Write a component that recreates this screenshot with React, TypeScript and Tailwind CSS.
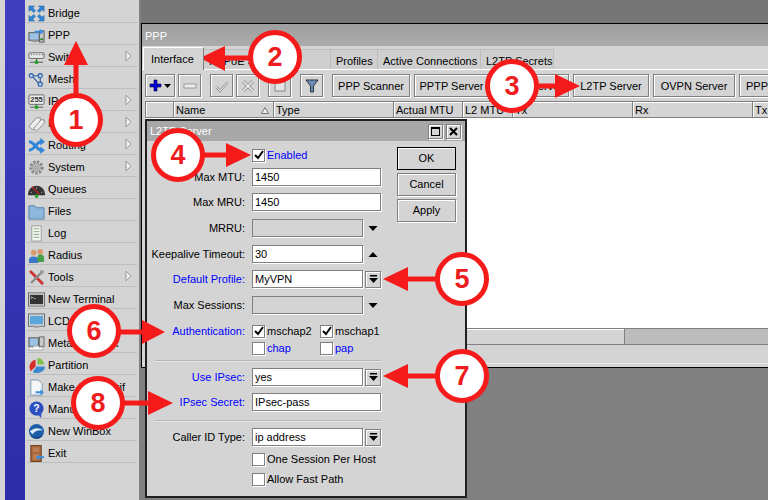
import React from 'react';

const font = { fontFamily: '"Liberation Sans", sans-serif' };

const raised = 'border border-[#808080] shadow-[inset_1px_1px_0_#fff,1px_1px_0_#fff]';

// Winbox side menu icons, roughly 17x17
const icons: Record<string, React.ReactNode> = {
  Bridge: (
    <g fill="#2f86d8" stroke="#17558f" strokeWidth="0.5">
      <path d="M1 1h6l-2 2 3 3-2 2-3-3-2 2z" />
      <path d="M17 1h-6l2 2-3 3 2 2 3-3 2 2z" />
      <path d="M1 17h6l-2-2 3-3-2-2-3 3-2-2z" />
      <path d="M17 17h-6l2-2-3-3 2-2 3 3 2-2z" />
    </g>
  ),
  PPP: (
    <g>
      <rect x="1" y="6" width="11" height="8" fill="#9cc3e6" stroke="#555" />
      <rect x="4" y="14" width="6" height="2" fill="#999" />
      <rect x="12" y="4" width="5" height="12" fill="#c8c8c8" stroke="#555" />
      <rect x="13" y="12" width="3" height="2" fill="#2a8a2a" />
      <path d="M7 4h6V2l4 3-4 3V6H7z" fill="#3a8ee0" />
    </g>
  ),
  Switch: (
    <g>
      <rect x="1" y="4" width="16" height="6" rx="1" fill="#e8e8e8" stroke="#666" />
      <path d="M3 6h1M6 6h1M9 6h1M12 6h1M15 6h1" stroke="#333" />
      <path d="M9 10v4M2 14h14" stroke="#555" />
      <circle cx="9" cy="14" r="2" fill="#27a327" />
    </g>
  ),
  Mesh: (
    <g fill="#b9d3ee" stroke="#2f5fa8" strokeWidth="1.2">
      <path d="M4 5h9M13 5v9M5 6l7 8" fill="none" />
      <circle cx="3.500" cy="5" r="2.200" />
      <circle cx="13" cy="5" r="2.200" />
      <circle cx="13" cy="14" r="2.200" />
    </g>
  ),
  IP: (
    <g>
      <rect x="1" y="2" width="16" height="10" rx="1" fill="#eee" stroke="#666" />
      <text x="9" y="10" textAnchor="middle" fontSize="8" fontWeight="700" fill="#333">255</text>
      <path d="M9 12v3M2 15h14" stroke="#555" />
      <circle cx="9" cy="15" r="2" fill="#27a327" />
    </g>
  ),
  MPLS: (
    <g fill="#eee" stroke="#888">
      <path d="M1 12l8-9h4v4l-8 9z" />
      <path d="M6 14l8-9h3v4l-8 8z" />
    </g>
  ),
  Routing: (
    <g fill="none" stroke="#2f86d8" strokeWidth="3">
      <path d="M1 5c6 0 8 9 13 9" />
      <path d="M1 14c6 0 8-9 13-9" />
      <path d="M13 1l5 4-5 4zM13 10l5 4-5 4z" fill="#2f86d8" stroke="none" />
    </g>
  ),
  System: (
    <g fill="none" stroke="#888">
      <circle cx="9" cy="9" r="6" strokeWidth="3" strokeDasharray="2.500 1.500" />
      <circle cx="9" cy="9" r="4" fill="#ddd" />
      <circle cx="9" cy="9" r="2" fill="#bbb" />
    </g>
  ),
  Queues: (
    <g>
      <path d="M0 14a9 9 0 0 1 18 0v1H0z" fill="#333" />
      <path d="M4 6l8 8" stroke="#e02020" strokeWidth="1.200" />
      <path d="M3 12h1M9 7v1M14 12h1" stroke="#ddd" />
      <circle cx="9" cy="16" r="2" fill="#27a327" />
    </g>
  ),
  Files: <path d="M1 5V3h6l2 2h8v12H1z" fill="#8db8de" stroke="#5580a8" />,
  Log: (
    <g>
      <path d="M4 1h10v16H4z" fill="#f3f6ee" stroke="#999" />
      <path d="M6 4h6M6 7h6M6 10h6M6 13h6" stroke="#8a8" />
    </g>
  ),
  Radius: (
    <g>
      <circle cx="6" cy="6" r="3" fill="#d99a6c" />
      <path d="M1 17v-3c0-3 2-4 5-4s5 1 5 4v3z" fill="#3b78c9" />
      <circle cx="13" cy="5" r="3" fill="#d99a6c" />
      <path d="M10 16v-5c0-2 1-3 3-3s4 1 4 3v5z" fill="#4aa04a" />
    </g>
  ),
  Tools: (
    <g strokeLinecap="round">
      <path d="M3 3l12 12" stroke="#c33" strokeWidth="3" />
      <path d="M15 3L4 14" stroke="#888" strokeWidth="2.500" />
      <path d="M13 1l4 1-1 3-3 0z" fill="#999" />
    </g>
  ),
  'New Terminal': (
    <g>
      <rect x="0.500" y="2" width="17" height="14" fill="#ddd" stroke="#666" />
      <rect x="2" y="4" width="14" height="10" fill="#333" />
      <path d="M3 6l2 1-2 1M6 8h2" stroke="#ddd" strokeWidth="0.800" fill="none" />
    </g>
  ),
  LCD: (
    <g>
      <rect x="0.500" y="1" width="17" height="13" fill="#ddd" stroke="#666" />
      <rect x="2" y="3" width="14" height="9" fill="#5aa6dc" />
      <path d="M6 14h6v2H6z" fill="#aaa" />
    </g>
  ),
  MetaROUTER: (
    <g>
      <rect x="1" y="3" width="10" height="9" fill="#9cc3e6" stroke="#555" />
      <rect x="12" y="2" width="5" height="10" fill="#ccc" stroke="#666" />
      <path d="M1 16c-1-3 2-4 4-3 1-2 6-2 7 0 3-1 5 1 4 3z" fill="#f4f4f4" stroke="#aaa" />
    </g>
  ),
  Partition: (
    <g>
      <path d="M8 3v7l-5 5C0 11 2 4 8 3z" fill="#d92d2d" />
      <path d="M10 1c4 0 7 3 7 7h-7z" fill="#7fc24c" />
      <path d="M9 10h9c0 4-4 7-9 7-2 0-3 0-4-1z" fill="#3b88cf" />
    </g>
  ),
  'Make Supout.rif': (
    <g>
      <path d="M3 1h8l4 4v12H3z" fill="#f4f6f8" stroke="#7a9ab0" />
      <path d="M8 13h5v-2l4 3-4 3v-2H8z" fill="#3a8ee0" />
    </g>
  ),
  Manual: (
    <g>
      <circle cx="9" cy="8" r="7.500" fill="#2b4fc0" />
      <path d="M10 14l4 4v-6z" fill="#2b4fc0" />
      <text x="9" y="12" textAnchor="middle" fontSize="11" fontWeight="700" fill="#fff">?</text>
    </g>
  ),
  'New WinBox': (
    <g>
      <circle cx="9" cy="9" r="8" fill="#1c5fa8" />
      <path d="M2 9c3-4 10-5 14-1-4-1-9 0-11 4z" fill="#dfeaf5" />
      <path d="M3 13c3 3 9 4 13-1-2 5-10 6-13 1z" fill="#0d2f5c" />
    </g>
  ),
  Exit: (
    <g>
      <rect x="3" y="0.500" width="11" height="17" fill="#a8653a" stroke="#6b3d20" />
      <rect x="5" y="2.500" width="7" height="5" fill="#bc7c50" />
      <rect x="5" y="9.500" width="7" height="6" fill="#bc7c50" />
      <path d="M17 12h-5v-2l-4 3 4 3v-2h5z" fill="#3a8ee0" />
    </g>
  ),
};

const menu = [
  ['Bridge', false],
  ['PPP', false],
  ['Switch', true],
  ['Mesh', false],
  ['IP', true],
  ['MPLS', true],
  ['Routing', true],
  ['System', true],
  ['Queues', false],
  ['Files', false],
  ['Log', false],
  ['Radius', false],
  ['Tools', true],
  ['New Terminal', false],
  ['LCD', false],
  ['MetaROUTER', false],
  ['Partition', false],
  ['Make Supout.rif', false],
  ['Manual', false],
  ['New WinBox', false],
  ['Exit', false],
] as const;

const tabs = [
  ['PPPoE Servers', 'w-[127px]'],
  ['Profiles', 'w-[47px]'],
  ['Active Connections', 'w-[103px]'],
  ['L2TP Secrets', 'w-[73px]'],
];

const columns = [
  ['', 'w-[28px]'],
  ['Name', 'w-[100px]'],
  ['Type', 'w-[120px]'],
  ['Actual MTU', 'w-[69px]'],
  ['L2 MTU', 'w-[50px]'],
  ['Tx', 'w-[120px]'],
  ['Rx', 'w-[120px]'],
  ['Tx', 'w-[40px]'],
];

function MenuItem({ name, sub }: { name: string; sub: boolean }) {
  return (
    <div className="flex h-[22px] items-center border-b border-[#bdbdbd] pl-[1px] pt-[3px] shrink-0 relative">
      <svg width="17" height="17" viewBox="0 0 18 18" className="shrink-0">
        {icons[name]}
      </svg>
      <span className="ml-[3px] whitespace-nowrap">{name}</span>
      {sub && (
        <svg width="7" height="12" viewBox="0 0 7 12" className="absolute left-[98px] top-[5px]">
          <path d="M1 1l5 5-5 5z" fill="#f0f0f0" stroke="#999" />
        </svg>
      )}
    </div>
  );
}

function ToolBtn({ w, children }: { w: string; children: React.ReactNode }) {
  return <div className={`${w} h-[23px] pt-[1px] shrink-0 flex items-center justify-center ${raised}`}>{children}</div>;
}

function Check({ on }: { on?: boolean }) {
  return (
    <div className="w-[13px] h-[13px] shrink-0 bg-white border border-[#808080] shadow-[1px_1px_0_#fff] flex items-center justify-center">
      {on && (
        <svg width="10" height="10" viewBox="0 0 10 10">
          <path d="M1 5l3 3 5-7" fill="none" stroke="#000" strokeWidth="2" />
        </svg>
      )}
    </div>
  );
}

function Input({ value, disabled, short }: { value?: string; disabled?: boolean; short?: boolean }) {
  return (
    <div
      className={`${short ? 'w-[111px]' : 'w-[129px]'} h-[18px] shrink-0 border border-[#808080] shadow-[1px_1px_0_#fff] pl-[2px] leading-[16px] ${disabled ? 'bg-[#d4d4d4]' : 'bg-white'}`}
    >
      {value}
    </div>
  );
}

function Row({ label, blue, mt, children }: { label?: string; blue?: boolean; mt: string; children: React.ReactNode }) {
  return (
    <div className={`flex h-[18px] items-center ${mt}`}>
      <div className={`w-[98px] mr-[7px] text-right whitespace-nowrap ${blue ? 'text-[#0000ff]' : ''}`}>{label}</div>
      {children}
    </div>
  );
}

function DropBtn() {
  return (
    <div className={`ml-[2px] w-[16px] h-[17px] shrink-0 flex items-center justify-center ${raised}`}>
      <svg width="9" height="9" viewBox="0 0 9 9">
        <path d="M1 0h7v1.500H1zM0 3h9L4.500 8z" fill="#000" />
      </svg>
    </div>
  );
}

function Updown({ up }: { up?: boolean }) {
  return (
    <svg width="16" height="8" viewBox="0 0 16 8" className="ml-[2px]">
      <path d={up ? 'M3.500 7h9L8 2z' : 'M3.500 2h9L8 7z'} fill="#000" />
    </svg>
  );
}

function Separator({ mt }: { mt: string }) {
  return <div className={`${mt} ml-[8px] w-[226px] h-[2px] border-t border-[#b4b4b4] border-b-[#e8e8e8] border-b`} />;
}

function Bubble({ n, x, y }: { n: number; x: string; y: string }) {
  return (
    <div
      className={`absolute ${x} ${y} w-[54px] h-[54px] rounded-full bg-white border-[5px] border-[#f51b1b] flex items-center justify-center text-[#ee1c1c] text-[27px] font-bold`}
    >
      {n}
    </div>
  );
}

export default function App() {
  return (
    <div className="relative flex w-[768px] h-[500px] overflow-hidden bg-[#d4d4d4] text-[11px] text-black" style={font}>
      {/* left strip and menu */}
      <div className="w-[5px] shrink-0 bg-[#d4d4d4]" />
      <div className="w-[20px] shrink-0 bg-gradient-to-b from-[#3f3fc0] to-[#2c2ca8]" />
      <div className="w-[110px] shrink-0 pt-[1px] mx-[2px] bg-[#d4d4d4] flex flex-col">
        {menu.map(([name, sub]) => (
          <MenuItem key={name} name={name} sub={sub} />
        ))}
      </div>

      {/* desktop area */}
      <div className="relative flex-1 bg-gradient-to-b from-[#757575] via-[#808080] to-[#808080] border-l-2 border-[#808080]">
        {/* PPP window */}
        <div className="absolute left-0 top-[23px] w-[640px] h-[345px] bg-[#d4d4d4] border-t border-b border-l border-black flex flex-col">
          <div className="h-[22px] shrink-0 bg-gradient-to-b from-[#9e9e9e] to-[#ababab] text-white flex items-center pl-[3px] pt-[3px]">PPP</div>
          <div className="h-[24px] shrink-0 flex items-end pl-[1px] border-b border-white relative">
            <div className="w-[61px] h-[23px] mb-[-1px] z-10 bg-[#d4d4d4] border-t border-l border-white border-r-[#808080] border-r flex items-center pl-[7px]">Interface</div>
            {tabs.map(([t, w]) => (
              <div key={t} className={`${w} h-[20px] shrink-0 border-r border-t border-[#bdbdbd] flex items-center pl-[5px] pt-[3px] whitespace-nowrap overflow-hidden bg-[#cfcfcf]`}>
                {t}
              </div>
            ))}
          </div>
          <div className="h-[23px] mt-[4px] shrink-0 flex items-center pl-[3px]">
            <ToolBtn w="w-[30px]">
              <svg width="24" height="16" viewBox="0 0 24 16">
                <path d="M6 2h3v4h4v3H9v4H6V9H2V6h4z" fill="#0000e0" stroke="#000030" strokeWidth="0.600" />
                <path d="M16 6h7l-3.500 4z" fill="#000" />
              </svg>
            </ToolBtn>
            <div className="ml-[3px]">
              <ToolBtn w="w-[23px]">
                <svg width="14" height="6" viewBox="0 0 14 6"><rect x="1" y="1" width="12" height="4" fill="#eee" stroke="#999" /></svg>
              </ToolBtn>
            </div>
            <div className="ml-[9px]">
              <ToolBtn w="w-[23px]">
                <svg width="14" height="14" viewBox="0 0 14 14"><path d="M1 8l4 4 8-9" fill="none" stroke="#999" strokeWidth="2.500" /><path d="M1 8l4 4 8-9" fill="none" stroke="#eee" strokeWidth="1" /></svg>
              </ToolBtn>
            </div>
            <div className="ml-[3px]">
              <ToolBtn w="w-[23px]">
                <svg width="14" height="14" viewBox="0 0 14 14"><path d="M2 2l10 10M12 2L2 12" fill="none" stroke="#999" strokeWidth="3.500" /><path d="M2 2l10 10M12 2L2 12" fill="none" stroke="#eee" strokeWidth="1.500" /></svg>
              </ToolBtn>
            </div>
            <div className="ml-[9px]">
              <ToolBtn w="w-[23px]">
                <svg width="12" height="12" viewBox="0 0 12 12"><rect x="1" y="1" width="10" height="10" fill="#e4e4e4" stroke="#888" /></svg>
              </ToolBtn>
            </div>
            <div className="ml-[9px]">
              <ToolBtn w="w-[23px]">
                <svg width="14" height="14" viewBox="0 0 14 14"><path d="M1 1h12L8.500 7v6h-3V7z" fill="#6c8db8" stroke="#333" /></svg>
              </ToolBtn>
            </div>
            <div className="ml-[9px] flex gap-[4px] whitespace-nowrap">
              <ToolBtn w="w-[78px]">PPP Scanner</ToolBtn>
              <ToolBtn w="w-[75px]">PPTP Server</ToolBtn>
              <ToolBtn w="w-[76px]">SSTP Server</ToolBtn>
              <ToolBtn w="w-[76px]">L2TP Server</ToolBtn>
              <ToolBtn w="w-[82px]">OVPN Server</ToolBtn>
              <ToolBtn w="w-[80px]"><span className="pl-[6px] w-full">PPPoE Scan</span></ToolBtn>
            </div>
          </div>
          <div className="mt-[4px] ml-[3px] flex-1 flex flex-col min-h-0">
            <div className="h-[17px] shrink-0 flex border-b border-[#808080]">
              {columns.map(([c, w], i) => (
                <div key={i} className={`${w} shrink-0 relative border-l border-t border-[#808080] shadow-[inset_1px_1px_0_#fff] pl-[2px] leading-[17px] whitespace-nowrap overflow-hidden`}>
                  {c}
                  {c === 'Name' && (
                    <svg width="8" height="7" viewBox="0 0 8 7" className="absolute right-[4px] top-[5px]"><path d="M4 0.500L7.500 6.500h-7z" fill="#eee" stroke="#777" /></svg>
                  )}
                </div>
              ))}
            </div>
            <div className="flex-1 bg-white" />
            <div className="h-[17px] shrink-0 flex bg-[#bcbcbc] border-y border-[#808080]">
              <div className="w-[480px] bg-[#d4d4d4] border-r border-[#808080] shadow-[inset_0_1px_0_#fff]" />
            </div>
          </div>
          <div className="h-[19px] shrink-0 border-b border-[#e8e8e8] mb-[3px]" />
        </div>

        {/* L2TP Server dialog */}
        <div className="absolute left-[4px] top-[119px] w-[322px] h-[379px] bg-[#d4d4d4] border-2 border-[#202020] flex flex-col">
          <div className="h-[20px] shrink-0 bg-[#a8a8a8] text-white flex items-center pl-[3px] relative">
            L2TP Server
            <div className={`absolute left-[281px] top-[3px] w-[15px] h-[15px] flex items-center justify-center bg-[#d4d4d4] ${raised}`}>
              <div className="w-[9px] h-[9px] border border-black border-t-2" />
            </div>
            <div className={`absolute left-[299px] top-[3px] w-[15px] h-[15px] flex items-center justify-center bg-[#d4d4d4] ${raised}`}>
              <svg width="9" height="9" viewBox="0 0 9 9"><path d="M1 1l7 7M8 1L1 8" stroke="#000" strokeWidth="2" /></svg>
            </div>
          </div>
          <div className="flex">
            <div className="w-[234px] flex flex-col">
              <Row mt="mt-[5px]">
                <Check on />
                <span className="ml-[2px] text-[#0000ff]">Enabled</span>
              </Row>
              <Row label="Max MTU:" mt="mt-[4px]"><Input value="1450" /></Row>
              <Row label="Max MRU:" mt="mt-[7px]"><Input value="1450" /></Row>
              <Row label="MRRU:" mt="mt-[8px]"><Input disabled short /><Updown /></Row>
              <Row label="Keepalive Timeout:" mt="mt-[8px]"><Input value="30" short /><Updown up /></Row>
              <Row label="Default Profile:" blue mt="mt-[7px]"><Input value="MyVPN" short /><DropBtn /></Row>
              <Row label="Max Sessions:" mt="mt-[8px]"><Input disabled short /><Updown /></Row>
              <Row label="Authentication:" blue mt="mt-[8px]">
                <Check on />
                <span className="ml-[2px] w-[53px]">mschap2</span>
                <Check on />
                <span className="ml-[2px]">mschap1</span>
              </Row>
              <Row mt="mt-[-1px]">
                <Check />
                <span className="ml-[2px] w-[53px] text-[#0000ff]">chap</span>
                <Check />
                <span className="ml-[2px] text-[#0000ff]">pap</span>
              </Row>
              <Separator mt="mt-[3px]" />
              <Row label="Use IPsec:" blue mt="mt-[6px]"><Input value="yes" short /><DropBtn /></Row>
              <Row label="IPsec Secret:" blue mt="mt-[7px]"><Input value="IPsec-pass" /></Row>
              <Separator mt="mt-[9px]" />
              <Row label="Caller ID Type:" mt="mt-[6px]"><Input value="ip address" short /><DropBtn /></Row>
              <Row mt="mt-[4px]">
                <Check />
                <span className="ml-[2px] whitespace-nowrap">One Session Per Host</span>
              </Row>
              <Row mt="mt-[2px]">
                <Check />
                <span className="ml-[2px]">Allow Fast Path</span>
              </Row>
            </div>
            <div className="ml-[16px] w-[59px] pt-[6px] flex flex-col gap-[3px]">
              <div className="h-[23px] border border-black shadow-[inset_1px_1px_0_#fff] flex items-center justify-center">OK</div>
              <div className={`h-[23px] flex items-center justify-center ${raised}`}>Cancel</div>
              <div className={`h-[23px] flex items-center justify-center ${raised}`}>Apply</div>
            </div>
          </div>
        </div>
      </div>

      {/* red callout arrows */}
      <svg width="768" height="500" viewBox="0 0 768 500" className="absolute left-0 top-0 pointer-events-none">
        <g fill="#f51b1b">
          <path d="M76 41l12 24h-9.500v35h-5V65H64z" />
          <path d="M200 58l25-12v9.500h30v5h-30V71z" />
          <path d="M580 86l-25-12v9.500h-20v5h20V98z" />
          <path d="M251 155l-25-12v9.500h-25v5h25V167z" />
          <path d="M383 279l25-12v9.500h30v5h-30V291z" />
          <path d="M165 332l-23-12v9.500h-25v5h25V344z" />
          <path d="M383 376l25-12v9.500h30v5h-30V388z" />
          <path d="M173 403l-25-12v9.500h-28v5h28V415z" />
        </g>
      </svg>
      <Bubble n={1} x="left-[49px]" y="top-[93px]" />
      <Bubble n={2} x="left-[248px]" y="top-[30px]" />
      <Bubble n={3} x="left-[485px]" y="top-[59px]" />
      <Bubble n={4} x="left-[151px]" y="top-[128px]" />
      <Bubble n={5} x="left-[435px]" y="top-[252px]" />
      <Bubble n={6} x="left-[67px]" y="top-[304px]" />
      <Bubble n={7} x="left-[435px]" y="top-[349px]" />
      <Bubble n={8} x="left-[71px]" y="top-[376px]" />
    </div>
  );
}
